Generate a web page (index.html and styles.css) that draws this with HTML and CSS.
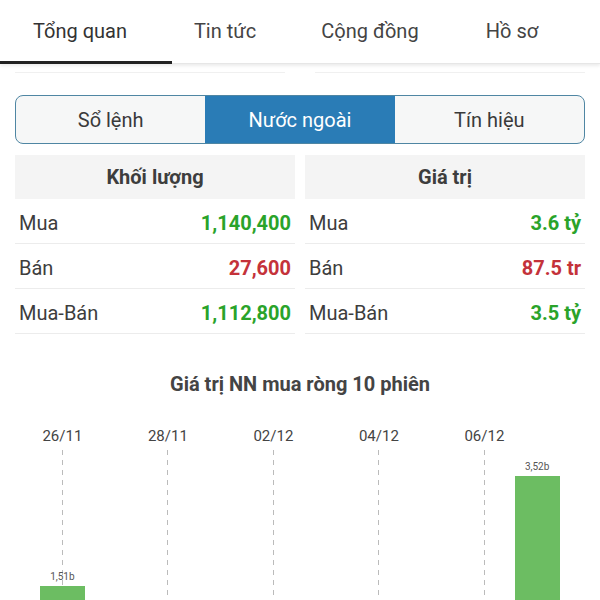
FILE: index.html
```html
<!DOCTYPE html>
<html>
<head>
    <title>Nước ngoài</title>
    <link rel="stylesheet" href="styles.css">
</head>
<body>
    <div class="tab-bar">
        <div class="tab tab-overview active">Tổng quan</div>
        <div class="tab tab-news">Tin tức</div>
        <div class="tab tab-community">Cộng đồng</div>
        <div class="tab tab-profile">Hồ sơ</div>
    </div>

    <div class="content">
        <div class="peek">
            <div class="peek-card"></div>
            <div class="peek-card"></div>
        </div>

        <div class="segment">
            <div class="segment-item">Sổ lệnh</div>
            <div class="segment-item selected">Nước ngoài</div>
            <div class="segment-item">Tín hiệu</div>
        </div>

        <div class="foreign-stats">
            <div class="stat-col">
                <div class="stat-head">Khối lượng</div>
                <div class="stat-row"><span>Mua</span><span class="up">1,140,400</span></div>
                <div class="stat-row"><span>Bán</span><span class="down">27,600</span></div>
                <div class="stat-row"><span>Mua-Bán</span><span class="up">1,112,800</span></div>
            </div>
            <div class="stat-col">
                <div class="stat-head">Giá trị</div>
                <div class="stat-row"><span>Mua</span><span class="up">3.6 tỷ</span></div>
                <div class="stat-row"><span>Bán</span><span class="down">87.5 tr</span></div>
                <div class="stat-row"><span>Mua-Bán</span><span class="up">3.5 tỷ</span></div>
            </div>
        </div>

        <div class="chart-title">Giá trị NN mua ròng 10 phiên</div>

        <div class="chart">
            <div class="chart-col">
                <div class="chart-date">26/11</div>
                <div class="chart-plot dashed">
                    <div class="bar-value">1,51b</div>
                    <div class="bar" style="height: 85px"></div>
                </div>
            </div>
            <div class="chart-col">
                <div class="chart-date"></div>
                <div class="chart-plot"></div>
            </div>
            <div class="chart-col">
                <div class="chart-date">28/11</div>
                <div class="chart-plot dashed"></div>
            </div>
            <div class="chart-col">
                <div class="chart-date"></div>
                <div class="chart-plot"></div>
            </div>
            <div class="chart-col">
                <div class="chart-date">02/12</div>
                <div class="chart-plot dashed"></div>
            </div>
            <div class="chart-col">
                <div class="chart-date"></div>
                <div class="chart-plot"></div>
            </div>
            <div class="chart-col">
                <div class="chart-date">04/12</div>
                <div class="chart-plot dashed"></div>
            </div>
            <div class="chart-col">
                <div class="chart-date"></div>
                <div class="chart-plot"></div>
            </div>
            <div class="chart-col">
                <div class="chart-date">06/12</div>
                <div class="chart-plot dashed"></div>
            </div>
            <div class="chart-col">
                <div class="chart-date"></div>
                <div class="chart-plot">
                    <div class="bar-value">3,52b</div>
                    <div class="bar" style="height: 195px"></div>
                </div>
            </div>
        </div>
    </div>
</body>
</html>
```

FILE: styles.css
```css
body {
    margin: 0;
    font-family: Roboto, 'Noto Sans', sans-serif;
    background-color: #fff;
    color: #333;
    overflow: hidden;
}
.tab-bar {
    display: flex;
    height: 64px;
    box-shadow: 0 2px 3px rgba(0,0,0,0.08);
    border-bottom: 1px solid #e6e6e6;
    box-sizing: border-box;
}
.tab {
    position: relative;
    font-size: 20px;
    line-height: 62px;
    text-align: center;
    color: #444;
}
.tab-overview {
    width: 160px;
    color: #333;
}
.tab-news {
    width: 130px;
}
.tab-community {
    width: 160px;
}
.tab-profile {
    width: 124px;
}
.tab.active::after {
    content: '';
    position: absolute;
    left: 0;
    bottom: -1px;
    width: 172px;
    height: 3px;
    background: #222;
}
.content {
    padding: 0 15px;
}
.peek {
    display: grid;
    grid-template-columns: 1fr 1fr;
    gap: 30px;
    height: 9px;
    margin-bottom: 22px;
}
.peek-card {
    border-bottom: 1px solid #f0f0f0;
}
.segment {
    display: grid;
    grid-template-columns: 1fr 1fr 1fr;
    height: 49px;
    border: 1px solid #4f86a3;
    border-radius: 8px;
    overflow: hidden;
    box-sizing: border-box;
    background: #f6f7f7;
}
.segment-item {
    font-size: 20px;
    line-height: 48px;
    text-align: center;
    color: #3a3a3a;
}
.segment-item.selected {
    background: #2a7cb6;
    color: #fff;
}
.foreign-stats {
    display: grid;
    grid-template-columns: 1fr 1fr;
    gap: 10px;
    margin-top: 11px;
}
.stat-head {
    background: #f4f4f4;
    height: 44px;
    line-height: 45px;
    text-align: center;
    font-size: 20px;
    font-weight: bold;
    color: #3d3d3d;
}
.stat-row {
    display: flex;
    justify-content: space-between;
    align-items: center;
    height: 45px;
    padding: 3px 4px 0;
    box-sizing: border-box;
    border-bottom: 1px solid #ececec;
    font-size: 20px;
    color: #3d3d3d;
}
.up {
    color: #2aa32a;
    font-weight: bold;
}
.down {
    color: #c4323a;
    font-weight: bold;
}
.chart-title {
    margin-top: 38px;
    text-align: center;
    font-size: 20px;
    font-weight: bold;
    color: #444;
}
.chart {
    display: flex;
    margin: 26px 0 0 21px;
}
.chart-col {
    width: 52.75px;
    flex: none;
    display: flex;
    flex-direction: column;
}
.chart-date {
    height: 22px;
    padding-top: 5px;
    font-size: 15px;
    text-align: center;
    color: #444;
    white-space: nowrap;
}
.chart-plot {
    position: relative;
    height: 221px;
    margin-top: 1px;
    display: flex;
    flex-direction: column;
    justify-content: flex-end;
    align-items: center;
}
.chart-plot.dashed {
    background: repeating-linear-gradient(to bottom, #bbb 0 5px, transparent 5px 10px) no-repeat center / 1px 100%;
}
.bar-value {
    font-size: 10px;
    color: #555;
    margin-bottom: 4px;
}
.bar {
    width: 45px;
    background: #6cbd62;
}
```
